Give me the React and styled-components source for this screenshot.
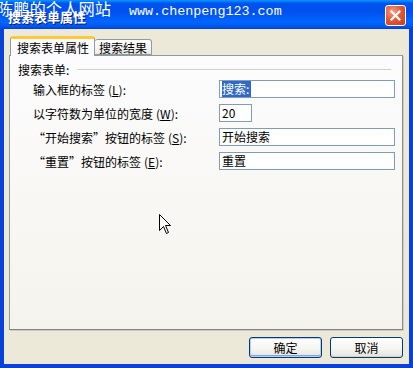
import React from 'react'
import styled, { createGlobalStyle } from 'styled-components'

const Global = createGlobalStyle`
  html, body { margin: 0; padding: 0; background: #ECE9D8; }
  body { font-family: "Noto Sans CJK SC", "Liberation Sans", sans-serif; }
`

const rows = [
  { label: '输入框的标签', key: 'L', value: '搜索:', selected: true },
  { label: '以字符数为单位的宽度', key: 'W', value: '20', narrow: true },
  { label: '“开始搜索”按钮的标签', key: 'S', value: '开始搜索' },
  { label: '“重置”按钮的标签', key: 'E', value: '重置' },
]

const App = () => {
  return (
    <>
      <Global />
      <Window>
        <TitleBar>
          <Title>搜索表单属性</Title>
          <CloseButton>
            <svg width="11" height="11" viewBox="0 0 11 11">
              <path d="M1.5 1.5 L9.5 9.5 M9.5 1.5 L1.5 9.5" stroke="#fff" strokeWidth="2.2" strokeLinecap="square" />
            </svg>
          </CloseButton>
          <Watermark>
            <SiteName>陈鹏的个人网站</SiteName>
            <SiteUrl>www.chenpeng123.com</SiteUrl>
          </Watermark>
        </TitleBar>

        <Body>
          <Tabs>
            <Tab active>搜索表单属性</Tab>
            <Tab>搜索结果</Tab>
          </Tabs>
          <Panel>
            <Group>
              <GroupLabel>搜索表单:</GroupLabel>
              <GroupLine />
            </Group>
            <Fields>
              {rows.map((r) => (
                <Row key={r.key}>
                  <Label>
                    {r.label}
                    <Key>(<u>{r.key}</u>)</Key>:
                  </Label>
                  <Input narrow={r.narrow}>
                    {r.selected ? <Selected>{r.value}</Selected> : r.value}
                  </Input>
                </Row>
              ))}
            </Fields>
            <Cursor>
              <svg width="13" height="21" viewBox="0 0 13 21">
                <path
                  d="M0.5 0.5 L0.5 16.5 L4.5 12.5 L7.5 19.5 L9.5 18.5 L6.5 11.5 L11.5 11.5 Z"
                  fill="#fff"
                  stroke="#000"
                  strokeWidth="1"
                />
              </svg>
            </Cursor>
          </Panel>
          <Buttons>
            <Button primary>确定</Button>
            <Button>取消</Button>
          </Buttons>
        </Body>
      </Window>
    </>
  )
}

const Window = styled.div`
  width: 413px;
  height: 368px;
  display: flex;
  flex-direction: column;
  background: #0842D8;
  overflow: hidden;
`

const TitleBar = styled.div`
  position: relative;
  height: 29px;
  flex-shrink: 0;
  display: flex;
  align-items: center;
  justify-content: space-between;
  padding: 0 7px 0 8px;
  background: linear-gradient(
    to bottom,
    #0997FF 0%,
    #0053EE 12%,
    #0050EE 40%,
    #0066FF 75%,
    #0059F0 90%,
    #0041D0 100%
  );
`

const Title = styled.div`
  color: #fff;
  font-weight: bold;
  font-size: 13px;
  padding-top: 3px;
  text-shadow: 1px 1px 0 #0A1874;
`

const CloseButton = styled.div`
  width: 19px;
  height: 19px;
  margin-top: 2px;
  border: 1px solid #fff;
  border-radius: 3px;
  background: radial-gradient(circle at 35% 30%, #F2A088 0%, #E35B3A 45%, #C83A18 100%);
  display: flex;
  align-items: center;
  justify-content: center;
`

const Watermark = styled.div`
  position: absolute;
  left: -3px;
  top: -4px;
  display: flex;
  align-items: baseline;
  gap: 18px;
  color: #fff;
  pointer-events: none;
`

const SiteName = styled.span`
  font-size: 16.3px;
  font-weight: 400;
`

const SiteUrl = styled.span`
  font-family: "Liberation Mono", monospace;
  font-size: 13.4px;
`

const Body = styled.div`
  flex: 1;
  margin: 0 4px 4px 4px;
  background: #ECE9D8;
  display: flex;
  flex-direction: column;
  padding: 6px 6px 0 5px;
`

const Tabs = styled.div`
  display: flex;
  align-items: flex-end;
  padding-left: 1px;
  height: 20px;
  position: relative;
  z-index: 1;
`

const Tab = styled.div`
  height: ${(p) => (p.active ? '20px' : '16px')};
  padding: ${(p) => (p.active ? '0 5px 0 6px' : '0 4px')};
  margin-bottom: ${(p) => (p.active ? '-1px' : '0')};
  font-size: 12px;
  line-height: ${(p) => (p.active ? '18px' : '15px')};
  color: #000;
  background: ${(p) =>
    p.active ? '#FCFCFE' : 'linear-gradient(to bottom, #FFFFFF, #ECEBE6)'};
  border: 1px solid #919B9C;
  border-bottom: ${(p) => (p.active ? 'none' : '1px solid #919B9C')};
  border-top: ${(p) => (p.active ? '3px solid #FFC83C' : '1px solid #919B9C')};
  border-radius: 3px 3px 0 0;
  border-left-width: ${(p) => (p.active ? '1px' : '0')};
  box-sizing: border-box;
`

const Panel = styled.div`
  position: relative;
  height: 275px;
  box-sizing: border-box;
  border: 1px solid #919B9C;
  border-right-color: #8A8E8C;
  border-bottom-color: #7D8280;
  box-shadow: 1px 1px 0 #D0CEBF;
  background: linear-gradient(to bottom, #FCFCFE 0%, #F7F6F1 70%, #F4F3EE 100%);
  padding: 5px 11px 0 8px;
`

const Group = styled.div`
  display: flex;
  align-items: center;
  gap: 8px;
  height: 17px;
`

const GroupLabel = styled.span`
  font-size: 12px;
  color: #000;
`

const GroupLine = styled.div`
  flex: 1;
  height: 0;
  border-top: 1px solid #D0D0BF;
  border-bottom: 1px solid #fff;
`

const Fields = styled.div`
  display: flex;
  flex-direction: column;
  gap: 6px;
  margin-top: 2px;
  padding-left: 15px;
`

const Row = styled.div`
  display: grid;
  grid-template-columns: 186px 1fr;
  align-items: center;
  height: 18px;
`

const Label = styled.span`
  font-size: 12px;
  color: #000;
  white-space: nowrap;
`

const Key = styled.span`
  margin-left: 3px;
`

const Input = styled.div`
  width: ${(p) => (p.narrow ? '33px' : '176px')};
  height: 18px;
  box-sizing: border-box;
  border: 1px solid #7F9DB9;
  background: #fff;
  font-size: 12px;
  line-height: 16px;
  padding-left: 2px;
  color: #000;
  white-space: nowrap;
  overflow: hidden;
`

const Selected = styled.span`
  background: #316AC5;
  color: #fff;
  padding-right: 2px;
`

const Cursor = styled.div`
  position: absolute;
  left: 149px;
  top: 158px;
  line-height: 0;
`

const Buttons = styled.div`
  display: flex;
  justify-content: flex-end;
  gap: 8px;
  margin-top: 7px;
`

const Button = styled.div`
  width: 73px;
  height: 21px;
  box-sizing: border-box;
  border: 1px solid #003C74;
  border-radius: 3px;
  background: linear-gradient(to bottom, #FFFFFF 0%, #F4F4F0 60%, #E3E2DA 100%);
  box-shadow: ${(p) =>
    p.primary
      ? 'inset 0 0 0 1px #B6CDF6, inset 0 -1px 0 1px #7FA4E6'
      : 'inset 0 -1px 0 #D6D0C5'};
  font-size: 12px;
  line-height: 19px;
  text-align: center;
  color: #000;
`

export default App
